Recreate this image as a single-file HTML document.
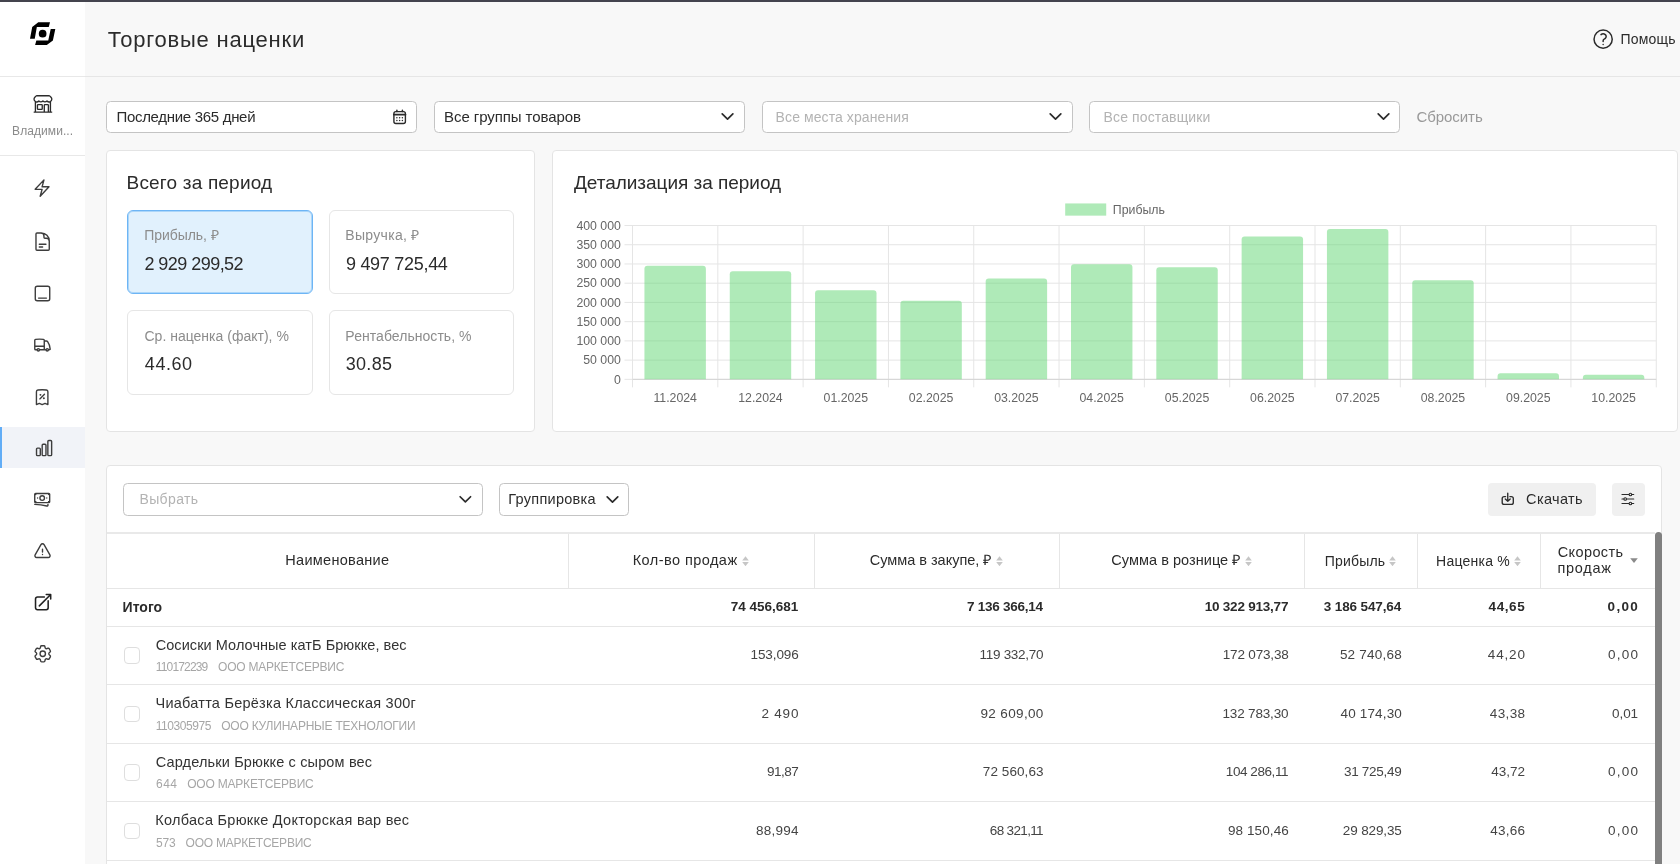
<!DOCTYPE html>
<html lang="ru">
<head>
<meta charset="utf-8">
<title>Торговые наценки</title>
<style>
*{box-sizing:border-box;}
html,body{margin:0;padding:0;}
body{width:1680px;height:864px;overflow:hidden;position:relative;background:#f8f8f8;color:#2b2b2b;
 font-family:"Liberation Sans",sans-serif;font-size:14px;}
.t{position:absolute;white-space:nowrap;display:block;}
.abs{position:absolute;}
.topbar{position:absolute;left:0;top:0;width:1680px;height:2px;background:#44444e;z-index:5;}
aside{position:absolute;left:0;top:0;width:85px;height:864px;background:#fff;will-change:transform;z-index:2;}
aside .sep{position:absolute;left:0;width:85px;height:1px;background:#e8e8e8;}
nav a{position:absolute;left:0;width:85px;display:block;}
nav a.active{background:#f1f3f8;border-left:2px solid #62adf6;}
nav svg,aside svg{position:absolute;overflow:visible;}
header{position:absolute;left:85px;top:0;width:1595px;height:77px;border-bottom:1px solid #e6e6e6;}
main{position:absolute;left:0;top:0;width:1680px;height:864px;will-change:transform;}
.field{position:absolute;height:32.5px;background:#fff;border:1px solid #c4c4c4;border-radius:4.5px;}
.card{position:absolute;background:#fff;border:1px solid #e4e4e4;border-radius:4px;}
.tile{position:absolute;background:#fff;border:1px solid #e6e6e6;border-radius:6px;}
.tile.on{background:#e1f1fd;border-color:#6db5f5;box-shadow:inset 0 0 0 1px rgba(109,181,245,.45);}
.btn{position:absolute;height:32.5px;background:#f0f0f0;border-radius:4px;}
.hl{position:absolute;height:1px;background:#e6e6e6;}
.vl{position:absolute;width:1px;background:#e6e6e6;}
.cb{position:absolute;width:16.5px;height:16.5px;border:1px solid #dedede;border-radius:4px;background:#fff;}
svg{display:block;}
</style>
</head>
<body>
<div class="topbar"></div>
<aside>
<svg width="85" height="76" viewBox="0 0 85 76" style="left:0;top:0">
<polygon fill="#000" points="38.3,22.2 50.0,22.2 48.75,26.9 36.85,26.9 34.75,38.8 30.0,38.8 32.2,27.1"/>
<polygon fill="#000" points="50.7,29.05 55.3,29.05 52.9,40.5 46.8,45.1 35.1,45.1 36.35,40.5 48.25,40.5"/>
<circle cx="42.65" cy="33.7" r="3.85" fill="#000"/>
</svg>
<div class="sep" style="top:76px"></div>
<svg viewBox="0 0 24 24" width="21.85" height="21.85" style="position:absolute;left:31.72px;top:92.53px" fill="none" stroke="#2b2b2b" stroke-width="1.483" stroke-linecap="round" stroke-linejoin="round"><path d="M13.5 21v-7.5a.75.75 0 0 1 .75-.75h3a.75.75 0 0 1 .75.75V21m-4.5 0H2.36m11.14 0H18m0 0h3.64m-1.39 0V9.349M3.75 21V9.349m0 0a3.001 3.001 0 0 0 3.75-.615A2.993 2.993 0 0 0 9.75 9.75c.896 0 1.7-.393 2.25-1.016a2.993 2.993 0 0 0 2.25 1.016c.896 0 1.7-.393 2.25-1.015a3.001 3.001 0 0 0 3.75.614m-16.5 0a3.004 3.004 0 0 1-.621-4.72l1.189-1.19A1.5 1.5 0 0 1 5.378 3h13.243a1.5 1.5 0 0 1 1.06.44l1.19 1.189a3 3 0 0 1-.621 4.72M6.75 18h3.75a.75.75 0 0 0 .75-.75V13.5a.75.75 0 0 0-.75-.75H6.75a.75.75 0 0 0-.75.75v3.75c0 .414.336.75.75.75Z"/></svg>
<span class="t" style="letter-spacing:0.067px;left:12.10px;top:123.14px;font-size:12px;line-height:16px;color:#8a8a8a;">Владими...</span>
<div class="sep" style="top:155px"></div>
<nav>
<a style="top:168.60px;height:40.9px"><svg viewBox="0 0 24 24" width="20.17" height="20.17" style="position:absolute;left:32.07px;top:9.12px" fill="none" stroke="#3d3d3d" stroke-width="1.666" stroke-linecap="round" stroke-linejoin="round"><path d="m3.75 13.5 10.5-11.25L12 10.5h8.25L9.75 21.75 12 13.5H3.75Z"/></svg></a>
<a style="top:220.32px;height:40.9px"><svg viewBox="0 0 24 24" width="21.26" height="21.26" style="position:absolute;left:31.98px;top:10.45px" fill="none" stroke="#3d3d3d" stroke-width="1.580" stroke-linecap="round" stroke-linejoin="round"><path d="M19.5 14.25v-2.625a3.375 3.375 0 0 0-3.375-3.375h-1.5A1.125 1.125 0 0 1 13.5 7.125v-1.5a3.375 3.375 0 0 0-3.375-3.375H8.25m0 12.75h7.5m-7.5 3H12M10.5 2.25H5.625c-.621 0-1.125.504-1.125 1.125v17.25c0 .621.504 1.125 1.125 1.125h12.75c.621 0 1.125-.504 1.125-1.125V11.25a9 9 0 0 0-9-9Z"/></svg></a>
<a style="top:272.04px;height:40.9px"><svg viewBox="0 0 24 24" width="21.02" height="21.02" style="position:absolute;left:32.04px;top:11.15px" fill="none" stroke="#3d3d3d" stroke-width="1.599" stroke-linecap="round" stroke-linejoin="round"><path d="M6 3.75h12A2.25 2.25 0 0 1 20.25 6v12A2.25 2.25 0 0 1 18 20.25H6A2.25 2.25 0 0 1 3.750 18V6A2.25 2.25 0 0 1 6 3.75ZM7.5 17.25h9"/></svg></a>
<a style="top:323.76px;height:40.9px"><svg viewBox="0 0 24 24" width="18.98" height="18.98" style="position:absolute;left:33.17px;top:11.30px" fill="none" stroke="#3d3d3d" stroke-width="1.770" stroke-linecap="round" stroke-linejoin="round"><path d="M8.25 18.75a1.5 1.5 0 0 1-3 0m3 0a1.5 1.5 0 0 0-3 0m3 0h6m-9 0H3.375a1.125 1.125 0 0 1-1.125-1.125V14.25m17.25 4.5a1.5 1.5 0 0 1-3 0m3 0a1.5 1.5 0 0 0-3 0m3 0h1.125c.621 0 1.129-.504 1.09-1.124a17.902 17.902 0 0 0-3.213-9.193 2.056 2.056 0 0 0-1.58-.86H14.25M16.500 18.75h-2.25m0-11.177v-.958c0-.568-.422-1.048-.987-1.106a48.554 48.554 0 0 0-10.026 0 1.106 1.106 0 0 0-.987 1.106v7.635m12-6.677v6.677m0 4.5v-4.5m0 0h-12"/></svg></a>
<a style="top:375.48px;height:40.9px"><svg viewBox="0 0 24 24" width="18.33" height="18.33" style="position:absolute;left:33.03px;top:12.46px" fill="none" stroke="#3d3d3d" stroke-width="1.833" stroke-linecap="round" stroke-linejoin="round"><path d="m9 14.25 6-6m4.5-3.493V21.75l-3.75-1.5-3.75 1.500-3.75-1.5-3.75 1.5V4.757c0-1.108.806-2.057 1.907-2.185a48.507 48.507 0 0 1 11.186 0c1.1.128 1.907 1.077 1.907 2.185ZM9.75 9h.008v.008H9.75V9Zm.375 0a.375.375 0 1 1-.75 0 .375.375 0 0 1 .75 0Zm4.125 4.500h.008v.008h-.008V13.5Zm.375 0a.375.375 0 1 1-.75 0 .375.375 0 0 1 .75 0Z"/></svg></a>
<a class="active" style="top:427.20px;height:40.9px"><svg viewBox="0 0 24 24" width="20.17" height="20.17" style="position:absolute;left:31.52px;top:10.54px" fill="none" stroke="#3d3d3d" stroke-width="1.666" stroke-linecap="round" stroke-linejoin="round"><path d="M3 13.125C3 12.504 3.504 12 4.125 12h2.25c.621 0 1.125.504 1.125 1.125v6.75C7.500 20.496 6.996 21 6.375 21h-2.25A1.125 1.125 0 0 1 3 19.875v-6.75ZM9.75 8.625c0-.621.504-1.125 1.125-1.125h2.25c.621 0 1.125.504 1.125 1.125v11.25c0 .621-.504 1.125-1.125 1.125h-2.25a1.125 1.125 0 0 1-1.125-1.125V8.625ZM16.5 4.125c0-.621.504-1.125 1.125-1.125h2.25C20.496 3 21 3.504 21 4.125v15.75c0 .621-.504 1.125-1.125 1.125h-2.25a1.125 1.125 0 0 1-1.125-1.125V4.125Z"/></svg></a>
<a style="top:478.92px;height:40.9px"><svg viewBox="0 0 24 24" width="18.40" height="18.40" style="position:absolute;left:33.46px;top:11.09px" fill="none" stroke="#3d3d3d" stroke-width="1.826" stroke-linecap="round" stroke-linejoin="round"><path d="M2.25 18.750a60.07 60.07 0 0 1 15.797 2.101c.727.198 1.453-.342 1.453-1.096V18.75M3.750 4.500v.75A.75.75 0 0 1 3 6h-.75m0 0v-.375c0-.621.504-1.125 1.125-1.125H20.250M2.250 6v9m18-10.500v.75c0 .414.336.75.75.75h.75m-1.500-1.500h.375c.621 0 1.125.504 1.125 1.125v9.75c0 .621-.504 1.125-1.125 1.125h-.375m1.500-1.500H21a.75.75 0 0 0-.75.75v.75m0 0H3.750m0 0h-.375a1.125 1.125 0 0 1-1.125-1.125V15m1.500 1.500v-.75A.75.75 0 0 0 3 15h-.75M15 10.500a3 3 0 1 1-6 0 3 3 0 0 1 6 0Zm3 0h.008v.008H18V10.500Zm-12 0h.008v.008H6V10.500Z"/></svg></a>
<a style="top:530.64px;height:40.9px"><svg viewBox="0 0 24 24" width="19.03" height="19.03" style="position:absolute;left:33.02px;top:11.20px" fill="none" stroke="#3d3d3d" stroke-width="1.765" stroke-linecap="round" stroke-linejoin="round"><path d="M12 9v3.750m-9.303 3.376c-.866 1.500.217 3.374 1.948 3.374h14.710c1.730 0 2.813-1.874 1.948-3.374L13.949 3.378c-.866-1.500-3.032-1.500-3.898 0L2.697 16.126ZM12 15.750h.007v.008H12v-.008Z"/></svg></a>
<a style="top:582.36px;height:40.9px"><svg viewBox="0 0 24 24" width="20.23" height="20.23" style="position:absolute;left:32.50px;top:9.25px" fill="none" stroke="#222" stroke-width="1.839" stroke-linecap="round" stroke-linejoin="round"><path d="M13.500 6H5.250A2.250 2.250 0 0 0 3 8.250v10.500A2.250 2.250 0 0 0 5.250 21h10.500A2.250 2.250 0 0 0 18 18.750V10.500m-10.500 6L21 3m0 0h-5.250M21 3v5.250"/></svg></a>
<a style="top:634.08px;height:40.9px"><svg viewBox="0 0 24 24" width="21.52" height="21.52" style="position:absolute;left:31.85px;top:8.44px" fill="none" stroke="#3d3d3d" stroke-width="1.561" stroke-linecap="round" stroke-linejoin="round"><path d="M9.594 3.940c.09-.542.56-.94 1.110-.94h2.593c.55 0 1.020.398 1.110.94l.213 1.281c.063.374.313.686.645.870.074.040.147.083.220.127.325.196.720.257 1.075.124l1.217-.456a1.125 1.125 0 0 1 1.370.490l1.296 2.247a1.125 1.125 0 0 1-.260 1.431l-1.003.827c-.293.241-.438.613-.430.992a7.723 7.723 0 0 1 0 .255c-.008.378.137.750.430.991l1.004.827c.424.350.534.955.260 1.430l-1.298 2.247a1.125 1.125 0 0 1-1.369.491l-1.217-.456c-.355-.133-.750-.072-1.076.124a6.470 6.470 0 0 1-.220.128c-.331.183-.581.495-.644.869l-.213 1.281c-.090.543-.560.940-1.110.940h-2.594c-.550 0-1.019-.398-1.110-.940l-.213-1.281c-.062-.374-.312-.686-.644-.870a6.520 6.520 0 0 1-.220-.127c-.325-.196-.720-.257-1.076-.124l-1.217.456a1.125 1.125 0 0 1-1.369-.490l-1.297-2.247a1.125 1.125 0 0 1 .260-1.431l1.004-.827c.292-.240.437-.613.430-.991a6.932 6.932 0 0 1 0-.255c.007-.380-.138-.751-.430-.992l-1.004-.827a1.125 1.125 0 0 1-.260-1.430l1.297-2.247a1.125 1.125 0 0 1 1.370-.491l1.216.456c.356.133.751.072 1.076-.124.072-.044.146-.086.220-.128.332-.183.582-.495.644-.869l.214-1.280ZM15 12a3 3 0 1 1-6 0 3 3 0 0 1 6 0Z"/></svg></a>
</nav>
</aside>
<main>
<header>
<span class="t" style="letter-spacing:0.784px;left:22.63px;top:24.88px;font-size:22px;line-height:29px;">Торговые наценки</span>
<svg viewBox="0 0 24 24" width="24.27" height="24.27" style="position:absolute;left:1506.02px;top:26.81px" fill="none" stroke="#2b2b2b" stroke-width="1.484" stroke-linecap="round" stroke-linejoin="round"><path d="M9.879 7.519c1.171-1.025 3.071-1.025 4.242 0 1.172 1.025 1.172 2.687 0 3.712-.203.179-.430.326-.670.442-.745.361-1.450.999-1.450 1.827v.750M21 12a9 9 0 1 1-18 0 9 9 0 0 1 18 0Zm-9 5.250h.008v.008H12v-.008Z"/></svg>
<span class="t" style="letter-spacing:0.179px;left:1535.60px;top:29.85px;font-size:14px;line-height:18px;">Помощь</span>
</header>
<section class="filters">
<div class="field" style="left:106.00px;top:100.75px;width:311px"><span class="t" style="letter-spacing:-0.305px;left:9.46px;top:5.45px;font-size:15px;line-height:20px;">Последние 365 дней</span><svg viewBox="392 108 16 18" width="16" height="18" style="position:absolute;left:285.00px;top:6.25px" fill="none" stroke="#2b2b2b" stroke-width="1.4" stroke-linecap="round" stroke-linejoin="round"><rect x="393.9" y="111.6" width="11.5" height="11.9" rx="2"/><path d="M393.9 114.6H405.4" stroke-width="1.9"/><path d="M396.9 110.2V111.6M402.4 110.2V111.6" stroke-width="1.5"/><g fill="#2b2b2b" stroke="none"><circle cx="396.9" cy="117.8" r=".75"/><circle cx="399.65" cy="117.8" r=".75"/><circle cx="402.4" cy="117.8" r=".75"/><circle cx="396.9" cy="120.6" r=".75"/><circle cx="399.65" cy="120.6" r=".75"/><circle cx="402.4" cy="120.6" r=".75"/></g></svg></div>
<div class="field" style="left:434.00px;top:100.75px;width:311px"><span class="t" style="letter-spacing:-0.079px;left:9.10px;top:5.45px;font-size:15px;line-height:20px;">Все группы товаров</span><svg viewBox="0 0 24 24" width="17.08" height="17.08" style="position:absolute;left:283.84px;top:6.11px" fill="none" stroke="#2b2b2b" stroke-width="2.389" stroke-linecap="round" stroke-linejoin="round"><path d="m19.500 8.250-7.500 7.500-7.500-7.500"/></svg></div>
<div class="field" style="left:762.00px;top:100.75px;width:311px"><span class="t" style="letter-spacing:0.090px;left:12.61px;top:6.60px;font-size:14px;line-height:18px;color:#b3b3b3;">Все места хранения</span><svg viewBox="0 0 24 24" width="17.04" height="17.04" style="position:absolute;left:283.83px;top:6.13px" fill="none" stroke="#2b2b2b" stroke-width="2.394" stroke-linecap="round" stroke-linejoin="round"><path d="m19.500 8.250-7.500 7.500-7.500-7.500"/></svg></div>
<div class="field" style="left:1089.00px;top:100.75px;width:311px"><span class="t" style="letter-spacing:0.118px;left:13.60px;top:6.60px;font-size:14px;line-height:18px;color:#b3b3b3;">Все поставщики</span><svg viewBox="0 0 24 24" width="17.04" height="17.04" style="position:absolute;left:284.53px;top:6.13px" fill="none" stroke="#2b2b2b" stroke-width="2.394" stroke-linecap="round" stroke-linejoin="round"><path d="m19.500 8.250-7.500 7.500-7.500-7.500"/></svg></div>
<span class="t" style="letter-spacing:-0.072px;left:1416.54px;top:107.00px;font-size:15px;line-height:20px;color:#999;">Сбросить</span>
</section>
<section class="card" style="left:106.25px;top:150.25px;width:428.75px;height:281.5px">
<span class="t" style="letter-spacing:0.189px;left:19.29px;top:18.67px;font-size:19px;line-height:25px;">Всего за период</span>
<div class="tile on" style="left:20.00px;top:58.25px;width:185.25px;height:84.5px"><span class="t" style="letter-spacing:-0.037px;left:15.90px;top:15.55px;font-size:14px;line-height:18px;color:#8c8c8c;">Прибыль, ₽</span><span class="t" style="letter-spacing:-0.536px;left:16.16px;top:42.26px;font-size:18px;line-height:23px;">2 929 299,52</span></div>
<div class="tile" style="left:221.50px;top:58.25px;width:185.25px;height:84.5px"><span class="t" style="letter-spacing:0.300px;left:15.61px;top:15.55px;font-size:14px;line-height:18px;color:#8c8c8c;">Выручка, ₽</span><span class="t" style="letter-spacing:-0.291px;left:16.22px;top:42.26px;font-size:18px;line-height:23px;">9 497 725,44</span></div>
<div class="tile" style="left:20.00px;top:158.75px;width:185.25px;height:84.5px"><span class="t" style="letter-spacing:0.008px;left:16.23px;top:15.55px;font-size:14px;line-height:18px;color:#8c8c8c;">Ср. наценка (факт), %</span><span class="t" style="letter-spacing:0.561px;left:16.57px;top:42.26px;font-size:18px;line-height:23px;">44.60</span></div>
<div class="tile" style="left:221.50px;top:158.75px;width:185.25px;height:84.5px"><span class="t" style="letter-spacing:0.048px;left:15.61px;top:15.55px;font-size:14px;line-height:18px;color:#8c8c8c;">Рентабельность, %</span><span class="t" style="letter-spacing:0.301px;left:16.01px;top:42.26px;font-size:18px;line-height:23px;">30.85</span></div>
</section>
<section class="card" style="left:552.00px;top:150.25px;width:1125.75px;height:281.50px">
<span class="t" style="letter-spacing:-0.031px;left:21.00px;top:18.67px;font-size:19px;line-height:25px;">Детализация за период</span>
<svg class="abs" style="left:0;top:0" width="1123.75" height="279.50" font-family="Liberation Sans, sans-serif" font-size="12.3" fill="#666">
<g stroke="#e5e5e5" stroke-width="1">
<line x1="71.50" x2="1103.25" y1="74.50" y2="74.50"/>
<line x1="71.50" x2="1103.25" y1="93.73" y2="93.73"/>
<line x1="71.50" x2="1103.25" y1="112.96" y2="112.96"/>
<line x1="71.50" x2="1103.25" y1="132.19" y2="132.19"/>
<line x1="71.50" x2="1103.25" y1="151.43" y2="151.43"/>
<line x1="71.50" x2="1103.25" y1="170.66" y2="170.66"/>
<line x1="71.50" x2="1103.25" y1="189.89" y2="189.89"/>
<line x1="71.50" x2="1103.25" y1="209.12" y2="209.12"/>
<line x1="71.50" x2="1103.25" y1="228.35" y2="228.35"/>
<line x1="79.50" x2="79.50" y1="74.50" y2="236.35"/>
<line x1="164.81" x2="164.81" y1="74.50" y2="236.35"/>
<line x1="250.12" x2="250.12" y1="74.50" y2="236.35"/>
<line x1="335.44" x2="335.44" y1="74.50" y2="236.35"/>
<line x1="420.75" x2="420.75" y1="74.50" y2="236.35"/>
<line x1="506.06" x2="506.06" y1="74.50" y2="236.35"/>
<line x1="591.38" x2="591.38" y1="74.50" y2="236.35"/>
<line x1="676.69" x2="676.69" y1="74.50" y2="236.35"/>
<line x1="762.00" x2="762.00" y1="74.50" y2="236.35"/>
<line x1="847.31" x2="847.31" y1="74.50" y2="236.35"/>
<line x1="932.62" x2="932.62" y1="74.50" y2="236.35"/>
<line x1="1017.94" x2="1017.94" y1="74.50" y2="236.35"/>
<line x1="1103.25" x2="1103.25" y1="74.50" y2="236.35"/>
</g>
<line x1="79.50" x2="1103.25" y1="228.35" y2="228.35" stroke="#d4d4d4" stroke-width="1"/>
<g fill="rgba(96,214,113,0.5)">
<path d="M91.44 228.35V117.85a3.0 3.0 0 0 1 3.0 -3.0H149.87a3.0 3.0 0 0 1 3.0 3.0V228.35Z"/>
<path d="M176.76 228.35V123.35a3.0 3.0 0 0 1 3.0 -3.0H235.18a3.0 3.0 0 0 1 3.0 3.0V228.35Z"/>
<path d="M262.07 228.35V142.15a3.0 3.0 0 0 1 3.0 -3.0H320.49a3.0 3.0 0 0 1 3.0 3.0V228.35Z"/>
<path d="M347.38 228.35V152.85a3.0 3.0 0 0 1 3.0 -3.0H405.81a3.0 3.0 0 0 1 3.0 3.0V228.35Z"/>
<path d="M432.69 228.35V130.55a3.0 3.0 0 0 1 3.0 -3.0H491.12a3.0 3.0 0 0 1 3.0 3.0V228.35Z"/>
<path d="M518.01 228.35V116.35a3.0 3.0 0 0 1 3.0 -3.0H576.43a3.0 3.0 0 0 1 3.0 3.0V228.35Z"/>
<path d="M603.32 228.35V119.15a3.0 3.0 0 0 1 3.0 -3.0H661.74a3.0 3.0 0 0 1 3.0 3.0V228.35Z"/>
<path d="M688.63 228.35V88.55a3.0 3.0 0 0 1 3.0 -3.0H747.06a3.0 3.0 0 0 1 3.0 3.0V228.35Z"/>
<path d="M773.94 228.35V80.95a3.0 3.0 0 0 1 3.0 -3.0H832.37a3.0 3.0 0 0 1 3.0 3.0V228.35Z"/>
<path d="M859.26 228.35V132.15a3.0 3.0 0 0 1 3.0 -3.0H917.68a3.0 3.0 0 0 1 3.0 3.0V228.35Z"/>
<path d="M944.57 228.35V225.15a3.0 3.0 0 0 1 3.0 -3.0H1002.99a3.0 3.0 0 0 1 3.0 3.0V228.35Z"/>
<path d="M1029.88 228.35V226.65a3.0 3.0 0 0 1 3.0 -3.0H1088.31a3.0 3.0 0 0 1 3.0 3.0V228.35Z"/>
</g>
<text x="67.90" y="78.80" text-anchor="end">400 000</text>
<text x="67.90" y="98.03" text-anchor="end">350 000</text>
<text x="67.90" y="117.26" text-anchor="end">300 000</text>
<text x="67.90" y="136.49" text-anchor="end">250 000</text>
<text x="67.90" y="155.73" text-anchor="end">200 000</text>
<text x="67.90" y="174.96" text-anchor="end">150 000</text>
<text x="67.90" y="194.19" text-anchor="end">100 000</text>
<text x="67.90" y="213.42" text-anchor="end">50 000</text>
<text x="67.90" y="232.65" text-anchor="end">0</text>
<text x="122.16" y="251.25" text-anchor="middle">11.2024</text>
<text x="207.47" y="251.25" text-anchor="middle">12.2024</text>
<text x="292.78" y="251.25" text-anchor="middle">01.2025</text>
<text x="378.09" y="251.25" text-anchor="middle">02.2025</text>
<text x="463.41" y="251.25" text-anchor="middle">03.2025</text>
<text x="548.72" y="251.25" text-anchor="middle">04.2025</text>
<text x="634.03" y="251.25" text-anchor="middle">05.2025</text>
<text x="719.34" y="251.25" text-anchor="middle">06.2025</text>
<text x="804.66" y="251.25" text-anchor="middle">07.2025</text>
<text x="889.97" y="251.25" text-anchor="middle">08.2025</text>
<text x="975.28" y="251.25" text-anchor="middle">09.2025</text>
<text x="1060.59" y="251.25" text-anchor="middle">10.2025</text>
<rect x="512.20" y="52.45" width="41" height="12.2" fill="rgba(96,214,113,0.5)"/>
<text x="559.85" y="62.85">Прибыль</text>
</svg>
</section>
<section class="card" style="left:106.25px;top:465.25px;width:1555.75px;height:420px;border-radius:4px 4px 0 0">
<div class="field" style="left:16.00px;top:16.75px;width:359.5px"><span class="t" style="letter-spacing:0.374px;left:15.21px;top:6.45px;font-size:14px;line-height:18px;color:#b3b3b3;">Выбрать</span><svg viewBox="0 0 24 24" width="16.72" height="16.72" style="position:absolute;left:332.64px;top:6.79px" fill="none" stroke="#2b2b2b" stroke-width="2.440" stroke-linecap="round" stroke-linejoin="round"><path d="m19.500 8.250-7.500 7.500-7.500-7.500"/></svg></div>
<div class="field" style="left:391.75px;top:16.75px;width:130px"><span class="t" style="letter-spacing:0.271px;left:8.31px;top:5.78px;font-size:14.5px;line-height:19px;">Группировка</span><svg viewBox="0 0 24 24" width="16.96" height="16.96" style="position:absolute;left:103.92px;top:6.67px" fill="none" stroke="#2b2b2b" stroke-width="2.406" stroke-linecap="round" stroke-linejoin="round"><path d="m19.500 8.250-7.500 7.500-7.500-7.500"/></svg></div>
<div class="btn" style="left:1381.05px;top:16.75px;width:107.5px"><svg viewBox="1500 491 16 16" width="16" height="16" style="position:absolute;left:11.70px;top:8.00px" fill="none" stroke="#2b2b2b" stroke-width="1.35" stroke-linecap="round" stroke-linejoin="round"><path d="M1505.6 496.6H1504.2A2 2 0 0 0 1502.2 498.6V502.4A2 2 0 0 0 1504.2 504.4H1511.3A2 2 0 0 0 1513.3 502.4V498.600A2 2 0 0 0 1511.3 496.6H1509.9"/><path d="M1507.75 493.2V501.2M1505.3 498.9L1507.75 501.3L1510.2 498.9"/></svg><span class="t" style="letter-spacing:0.346px;left:37.78px;top:6.78px;font-size:14.5px;line-height:19px;">Скачать</span></div>
<div class="btn" style="left:1504.75px;top:16.75px;width:33px"><svg viewBox="1620 491 16 16" width="16" height="16" style="position:absolute;left:8.00px;top:8.00px" fill="none" stroke="#2b2b2b" stroke-width="1.3" stroke-linecap="round" stroke-linejoin="round"><path d="M1622 494.5H1633.700M1622 499H1633.700M1622 503.5H1633.700" stroke-width="1.2"/><g fill="#f0f0f0" stroke-width="1.1"><circle cx="1630.4" cy="494.5" r="1.3"/><circle cx="1625.2" cy="499" r="1.3"/><circle cx="1630.4" cy="503.5" r="1.3"/></g></svg></div>
<div class="tbl abs" style="left:0;top:65.75px;width:1547.25px;height:340px">
<div class="hl" style="left:0;top:0;width:1547.25px;height:2px;background:#e9e9e9"></div>
<div class="hl" style="left:0;top:55.50px;width:1547.25px"></div><div class="hl" style="left:0;top:93.75px;width:1547.25px"></div><div class="hl" style="left:0;top:152.25px;width:1547.25px"></div><div class="hl" style="left:0;top:210.75px;width:1547.25px"></div><div class="hl" style="left:0;top:269.25px;width:1547.25px"></div><div class="hl" style="left:0;top:327.75px;width:1547.25px"></div>
<div class="vl" style="left:461.00px;top:2px;height:54.00px"></div><div class="vl" style="left:706.25px;top:2px;height:54.00px"></div><div class="vl" style="left:951.75px;top:2px;height:54.00px"></div><div class="vl" style="left:1197.00px;top:2px;height:54.00px"></div><div class="vl" style="left:1310.00px;top:2px;height:54.00px"></div><div class="vl" style="left:1433.00px;top:2px;height:54.00px"></div>
<span class="t" style="letter-spacing:0.295px;left:178.07px;top:19.38px;font-size:14.5px;line-height:19px;color:#2b2b2b;">Наименование</span><span class="t" style="letter-spacing:0.448px;left:525.46px;top:19.38px;font-size:14.5px;line-height:19px;color:#2b2b2b;">Кол-во продаж</span><svg class="abs" style="left:634.75px;top:23.60px" width="7" height="10.4" viewBox="0 0 7 10.4"><path d="M3.5 0.2L6.8 4.4H0.2Z M3.5 10.2L6.8 6H0.2Z" fill="#c6c6c6"/></svg><span class="t" style="letter-spacing:-0.008px;left:762.48px;top:19.38px;font-size:14.5px;line-height:19px;color:#2b2b2b;">Сумма в закупе, ₽</span><svg class="abs" style="left:888.35px;top:23.60px" width="7" height="10.4" viewBox="0 0 7 10.4"><path d="M3.5 0.2L6.8 4.4H0.2Z M3.5 10.2L6.8 6H0.2Z" fill="#c6c6c6"/></svg><span class="t" style="letter-spacing:0.040px;left:1004.11px;top:19.38px;font-size:14.5px;line-height:19px;color:#2b2b2b;">Сумма в рознице ₽</span><svg class="abs" style="left:1137.75px;top:23.60px" width="7" height="10.4" viewBox="0 0 7 10.4"><path d="M3.5 0.2L6.8 4.4H0.2Z M3.5 10.2L6.8 6H0.2Z" fill="#c6c6c6"/></svg><span class="t" style="letter-spacing:0.172px;left:1217.57px;top:19.95px;font-size:14px;line-height:18px;color:#2b2b2b;">Прибыль</span><svg class="abs" style="left:1282.00px;top:23.60px" width="7" height="10.4" viewBox="0 0 7 10.4"><path d="M3.5 0.2L6.8 4.4H0.2Z M3.5 10.2L6.8 6H0.2Z" fill="#c6c6c6"/></svg><span class="t" style="letter-spacing:0.233px;left:1328.85px;top:19.95px;font-size:14px;line-height:18px;color:#2b2b2b;">Наценка %</span><svg class="abs" style="left:1406.85px;top:23.60px" width="7" height="10.4" viewBox="0 0 7 10.4"><path d="M3.5 0.2L6.8 4.4H0.2Z M3.5 10.2L6.8 6H0.2Z" fill="#c6c6c6"/></svg><span class="t" style="letter-spacing:0.395px;left:1450.48px;top:11.08px;font-size:14.5px;line-height:19px;color:#2b2b2b;">Скорость</span><span class="t" style="letter-spacing:0.674px;left:1450.34px;top:27.38px;font-size:14.5px;line-height:19px;color:#2b2b2b;">продаж</span><svg class="abs" style="left:1522.55px;top:26.20px" width="8" height="5" viewBox="0 0 8 5"><path d="M0.2 0.2H7.8L4 4.9Z" fill="#8a8a8a"/></svg>
<span class="t" style="letter-spacing:0.013px;left:15.36px;top:66.15px;font-size:14px;line-height:18px;font-weight:700;">Итого</span><span class="t" style="letter-spacing:-0.005px;left:623.59px;top:66.32px;font-size:13.5px;line-height:18px;font-weight:700;">74 456,681</span><span class="t" style="letter-spacing:-0.252px;left:859.66px;top:66.32px;font-size:13.5px;line-height:18px;font-weight:700;">7 136 366,14</span><span class="t" style="letter-spacing:-0.220px;left:1097.48px;top:66.32px;font-size:13.5px;line-height:18px;font-weight:700;">10 322 913,77</span><span class="t" style="letter-spacing:-0.128px;left:1216.56px;top:66.32px;font-size:13.5px;line-height:18px;font-weight:700;">3 186 547,64</span><span class="t" style="letter-spacing:0.597px;left:1381.32px;top:66.32px;font-size:13.5px;line-height:18px;font-weight:700;">44,65</span><span class="t" style="letter-spacing:1.350px;left:1500.31px;top:66.32px;font-size:13.5px;line-height:18px;font-weight:700;">0,00</span>
<div class="cb" style="left:16.25px;top:115.45px"></div><span class="t" style="letter-spacing:0.060px;left:48.48px;top:103.58px;font-size:14.5px;line-height:19px;color:#333;">Сосиски Молочные катБ Брюкке, вес</span><span class="t" style="letter-spacing:-0.838px;left:48.54px;top:127.09px;font-size:12px;line-height:16px;color:#a6a6a6;">110172239</span><span class="t" style="letter-spacing:-0.227px;left:110.86px;top:127.09px;font-size:12px;line-height:16px;color:#a6a6a6;">ООО МАРКЕТСЕРВИС</span><span class="t" style="letter-spacing:-0.093px;left:643.25px;top:114.42px;font-size:13.5px;line-height:18px;color:#444;">153,096</span><span class="t" style="letter-spacing:-0.275px;left:872.23px;top:114.42px;font-size:13.5px;line-height:18px;color:#444;">119 332,70</span><span class="t" style="letter-spacing:-0.172px;left:1115.51px;top:114.42px;font-size:13.5px;line-height:18px;color:#444;">172 073,38</span><span class="t" style="letter-spacing:0.219px;left:1232.65px;top:114.42px;font-size:13.5px;line-height:18px;color:#444;">52 740,68</span><span class="t" style="letter-spacing:0.837px;left:1380.60px;top:114.42px;font-size:13.5px;line-height:18px;color:#444;">44,20</span><span class="t" style="letter-spacing:1.243px;left:1500.72px;top:114.42px;font-size:13.5px;line-height:18px;color:#444;">0,00</span>
<div class="cb" style="left:16.25px;top:173.95px"></div><span class="t" style="letter-spacing:0.239px;left:48.29px;top:162.08px;font-size:14.5px;line-height:19px;color:#333;">Чиабатта Берёзка Классическая 300г</span><span class="t" style="letter-spacing:-0.453px;left:48.54px;top:185.59px;font-size:12px;line-height:16px;color:#a6a6a6;">110305975</span><span class="t" style="letter-spacing:-0.221px;left:114.01px;top:185.59px;font-size:12px;line-height:16px;color:#a6a6a6;">ООО КУЛИНАРНЫЕ ТЕХНОЛОГИИ</span><span class="t" style="letter-spacing:0.784px;left:654.23px;top:172.92px;font-size:13.5px;line-height:18px;color:#444;">2 490</span><span class="t" style="letter-spacing:0.359px;left:873.19px;top:172.92px;font-size:13.5px;line-height:18px;color:#444;">92 609,00</span><span class="t" style="letter-spacing:-0.173px;left:1115.25px;top:172.92px;font-size:13.5px;line-height:18px;color:#444;">132 783,30</span><span class="t" style="letter-spacing:0.157px;left:1233.29px;top:172.92px;font-size:13.5px;line-height:18px;color:#444;">40 174,30</span><span class="t" style="letter-spacing:0.374px;left:1382.60px;top:172.92px;font-size:13.5px;line-height:18px;color:#444;">43,38</span><span class="t" style="letter-spacing:-0.051px;left:1504.75px;top:172.92px;font-size:13.5px;line-height:18px;color:#444;">0,01</span>
<div class="cb" style="left:16.25px;top:232.45px"></div><span class="t" style="letter-spacing:0.149px;left:48.48px;top:220.58px;font-size:14.5px;line-height:19px;color:#333;">Сардельки Брюкке с сыром вес</span><span class="t" style="letter-spacing:0.387px;left:48.83px;top:244.09px;font-size:12px;line-height:16px;color:#a6a6a6;">644</span><span class="t" style="letter-spacing:-0.210px;left:80.01px;top:244.09px;font-size:12px;line-height:16px;color:#a6a6a6;">ООО МАРКЕТСЕРВИС</span><span class="t" style="letter-spacing:-0.505px;left:659.78px;top:231.42px;font-size:13.5px;line-height:18px;color:#444;">91,87</span><span class="t" style="letter-spacing:0.082px;left:875.56px;top:231.42px;font-size:13.5px;line-height:18px;color:#444;">72 560,63</span><span class="t" style="letter-spacing:-0.425px;left:1118.55px;top:231.42px;font-size:13.5px;line-height:18px;color:#444;">104 286,11</span><span class="t" style="letter-spacing:-0.281px;left:1236.68px;top:231.42px;font-size:13.5px;line-height:18px;color:#444;">31 725,49</span><span class="t" style="letter-spacing:-0.028px;left:1384.02px;top:231.42px;font-size:13.5px;line-height:18px;color:#444;">43,72</span><span class="t" style="letter-spacing:1.243px;left:1500.72px;top:231.42px;font-size:13.5px;line-height:18px;color:#444;">0,00</span>
<div class="cb" style="left:16.25px;top:290.95px"></div><span class="t" style="letter-spacing:0.275px;left:48.06px;top:279.08px;font-size:14.5px;line-height:19px;color:#333;">Колбаса Брюкке Докторская вар вес</span><span class="t" style="letter-spacing:-0.191px;left:48.76px;top:302.59px;font-size:12px;line-height:16px;color:#a6a6a6;">573</span><span class="t" style="letter-spacing:-0.235px;left:78.36px;top:302.59px;font-size:12px;line-height:16px;color:#a6a6a6;">ООО МАРКЕТСЕРВИС</span><span class="t" style="letter-spacing:0.250px;left:648.65px;top:289.92px;font-size:13.5px;line-height:18px;color:#444;">88,994</span><span class="t" style="letter-spacing:-0.658px;left:882.59px;top:289.92px;font-size:13.5px;line-height:18px;color:#444;">68 321,11</span><span class="t" style="letter-spacing:0.102px;left:1120.68px;top:289.92px;font-size:13.5px;line-height:18px;color:#444;">98 150,46</span><span class="t" style="letter-spacing:-0.137px;left:1235.56px;top:289.92px;font-size:13.5px;line-height:18px;color:#444;">29 829,35</span><span class="t" style="letter-spacing:0.234px;left:1383.10px;top:289.92px;font-size:13.5px;line-height:18px;color:#444;">43,66</span><span class="t" style="letter-spacing:1.243px;left:1500.72px;top:289.92px;font-size:13.5px;line-height:18px;color:#444;">0,00</span>
</div>
<div class="abs" style="left:1547.25px;top:65.75px;width:7px;height:340px;background:#808080;border-radius:3.5px 3.5px 0 0"></div>
</section>
</main>
</body>
</html>
